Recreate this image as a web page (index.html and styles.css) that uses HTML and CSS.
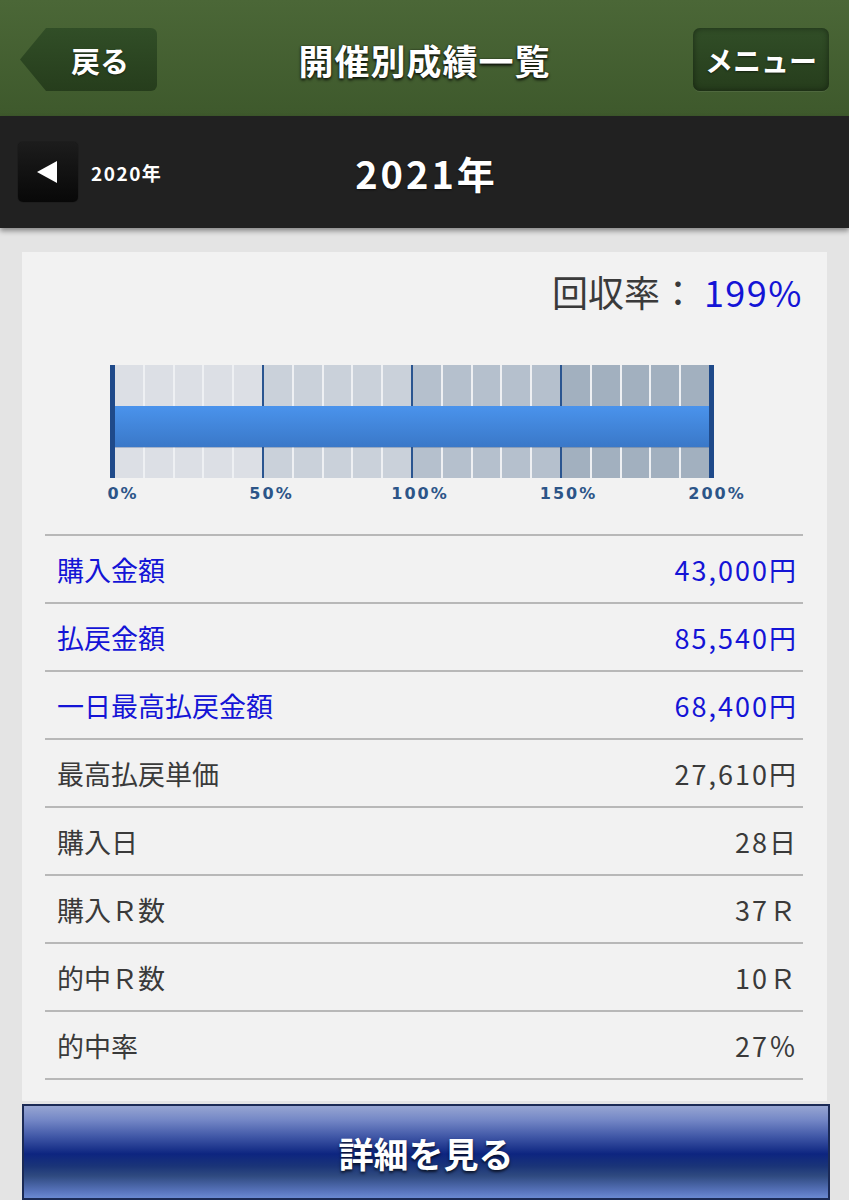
FILE: index.html
```html
<!DOCTYPE html>
<html lang="ja">
<head>
<meta charset="utf-8">
<title>開催別成績一覧</title>
<link rel="stylesheet" href="styles.css">
</head>
<body>
<header class="topbar">
  <a class="back-btn">戻る</a>
  <h1 class="title">開催別成績一覧</h1>
  <a class="menu-btn">メニュー</a>
</header>
<div class="yearbar">
  <div class="prev">
    <a class="prev-btn"><svg width="60" height="60" viewBox="0 0 60 60"><polygon points="19,30 39,19 39,41" fill="#fff"/></svg></a>
    <span class="prev-year">2020年</span>
  </div>
  <h2 class="cur-year">2021年</h2>
  <div></div>
</div>
<main class="main">
  <section class="card">
    <div class="rate"><span class="rate-label">回収率：</span><span class="rate-value">199%</span></div>
    <div class="chart">
      <div class="gauge">
        <div class="seg s1"><i></i><i></i><i></i><i></i><i></i></div>
        <div class="seg s2"><i></i><i></i><i></i><i></i><i></i></div>
        <div class="seg s3"><i></i><i></i><i></i><i></i><i></i></div>
        <div class="seg s4"><i></i><i></i><i></i><i></i><i></i></div>
        <div class="bar" style="width: 100%"></div>
      </div>
      <div class="scale">
        <span><b>0%</b></span><span><b>50%</b></span><span><b>100%</b></span><span><b>150%</b></span><span><b>200%</b></span>
      </div>
    </div>
    <table class="stats">
      <tr class="link"><td>購入金額</td><td class="val">43,000円</td></tr>
      <tr class="link"><td>払戻金額</td><td class="val">85,540円</td></tr>
      <tr class="link"><td>一日最高払戻金額</td><td class="val">68,400円</td></tr>
      <tr><td>最高払戻単価</td><td class="val">27,610円</td></tr>
      <tr><td>購入日</td><td class="val">28日</td></tr>
      <tr><td>購入Ｒ数</td><td class="val">37Ｒ</td></tr>
      <tr><td>的中Ｒ数</td><td class="val">10Ｒ</td></tr>
      <tr class="last"><td>的中率</td><td class="val">27％</td></tr>
    </table>
  </section>
  <a class="detail-btn">詳細を見る</a>
</main>
</body>
</html>
```
FILE: styles.css
```css
* { box-sizing: border-box; }
body {
  margin: 0;
  background: #e4e4e4;
  font-family: "Noto Sans CJK JP", "Noto Sans", sans-serif;
  overflow: hidden;
}
a { text-decoration: none; }

.topbar {
  height: 116px;
  display: grid;
  grid-template-columns: 1fr auto 1fr;
  align-items: center;
  padding: 3px 20px 0 20px;
  background: linear-gradient(#4b6737, #3e592c);
}
.back-btn {
  justify-self: start;
  width: 137px;
  height: 63px;
  background: linear-gradient(#314e27, #263d1c);
  clip-path: polygon(0 50%, 26px 0, 100% 0, 100% 100%, 26px 100%);
  border-radius: 0 6px 6px 0;
  display: flex;
  align-items: center;
  justify-content: center;
  padding-left: 23px;
  color: #fff;
  font-weight: 700;
  font-size: 29px;
  text-shadow: 0 1px 2px rgba(0,0,0,.5);
}
.title {
  margin: 0;
  color: #fff;
  font-size: 35px;
  font-weight: 700;
  letter-spacing: 1px;
  text-shadow: 0 2px 3px rgba(0,0,0,.8), 0 0 2px rgba(0,0,0,.6);
}
.menu-btn {
  justify-self: end;
  width: 136px;
  height: 63px;
  border-radius: 7px;
  background: linear-gradient(#314e27, #263d1c);
  box-shadow: inset 0 0 6px rgba(0,0,0,.45), 0 1px 0 rgba(255,255,255,.08);
  display: flex;
  align-items: center;
  justify-content: center;
  color: #fff;
  font-weight: 700;
  font-size: 28px;
  text-shadow: 0 1px 2px rgba(0,0,0,.5);
}

.yearbar {
  position: relative;
  z-index: 1;
  height: 112px;
  display: grid;
  grid-template-columns: 1fr auto 1fr;
  align-items: center;
  padding: 0 18px;
  background: #212121;
  box-shadow: 0 3px 5px rgba(0,0,0,.4);
}
.prev { display: flex; align-items: center; }
.prev-btn {
  display: block;
  width: 60px;
  height: 60px;
  border-radius: 5px;
  background: linear-gradient(#1c1c1c, #080808);
  box-shadow: 0 0 1px #000;
}
.prev-btn svg { display: block; }
.prev-year {
  margin-left: 13px;
  color: #fff;
  font-size: 19px;
  font-weight: 700;
  letter-spacing: 1.5px;
}
.cur-year {
  margin: 0 0 0 4px;
  color: #fff;
  font-size: 38px;
  font-weight: 700;
  letter-spacing: 3px;
  text-shadow: 0 1px 2px rgba(0,0,0,.6);
}

.main { padding: 24px 19px 0 22px; }
.card {
  background: #f2f2f2;
  margin-right: 3px;
  padding: 14px 24px 21px 23px;
}
.rate {
  text-align: right;
  padding-right: 0;
  font-size: 36px;
  line-height: 50px;
  color: #3a3a3a;
}
.rate-value { color: #1414d6; letter-spacing: 1.5px; margin-left: 8px; }

.chart { margin: 49px 0 0 65px; }
.gauge {
  position: relative;
  width: 604px;
  height: 113px;
  display: flex;
  border-left: 5px solid #1f4a8a;
  border-right: 5px solid #1f4a8a;
}
.seg {
  flex: 1;
  display: flex;
  gap: 2px;
  background: #eef0f3;
}
.seg + .seg { border-left: 2px solid #2a5590; }
.seg i { flex: 1; }
.s1 i { background: #dcdfe5; }
.s2 i { background: #cad1da; }
.s3 i { background: #b5c0cd; }
.s4 i { background: #a2b0bf; }
.bar {
  position: absolute;
  left: 0;
  top: 41px;
  height: 41px;
  background: linear-gradient(#4a93ec, #3a78c8);
  box-shadow: 0 1px 0 rgba(40,80,140,.3);
}
.scale {
  display: flex;
  justify-content: space-between;
  width: 594px;
  margin: 6px 0 0 13px;
  height: 20px;
}
.scale span {
  flex: 0 0 0;
  width: 0;
  min-width: 0;
  display: flex;
  justify-content: center;
  white-space: nowrap;
}
.scale b {
  font-family: "DejaVu Sans", Verdana, sans-serif;
  font-size: 16px;
  font-weight: 700;
  letter-spacing: 2px;
  color: #2c5588;
  line-height: 20px;
}

.stats {
  width: 100%;
  margin-top: 30px;
  border-collapse: collapse;
  font-size: 27px;
  color: #3a3a3a;
}
.stats td {
  height: 68px;
  border-top: 2px solid #b8b8b8;
  padding: 0 0 0 12px;
  vertical-align: middle;
}
.stats td.val { text-align: right; padding: 0 5px 0 0; letter-spacing: 2px; }
.stats tr.last td { border-bottom: 2px solid #b8b8b8; }
.stats tr.link td { color: #1414d6; }

.detail-btn {
  display: flex;
  align-items: center;
  justify-content: center;
  margin-top: 3px;
  height: 96px;
  border: 2px solid #1b2a55;
  background: linear-gradient(#97a5d2 0px, #7487c6 14px, #4259a8 30px, #0d2580 48px, #1a3478 60px, #2f4a80 70px, #5a76bf 86px, #7090d8 94px);
  color: #fff;
  font-size: 35px;
  font-weight: 700;
  text-shadow: 0 2px 3px rgba(0,0,0,.7);
}
```
